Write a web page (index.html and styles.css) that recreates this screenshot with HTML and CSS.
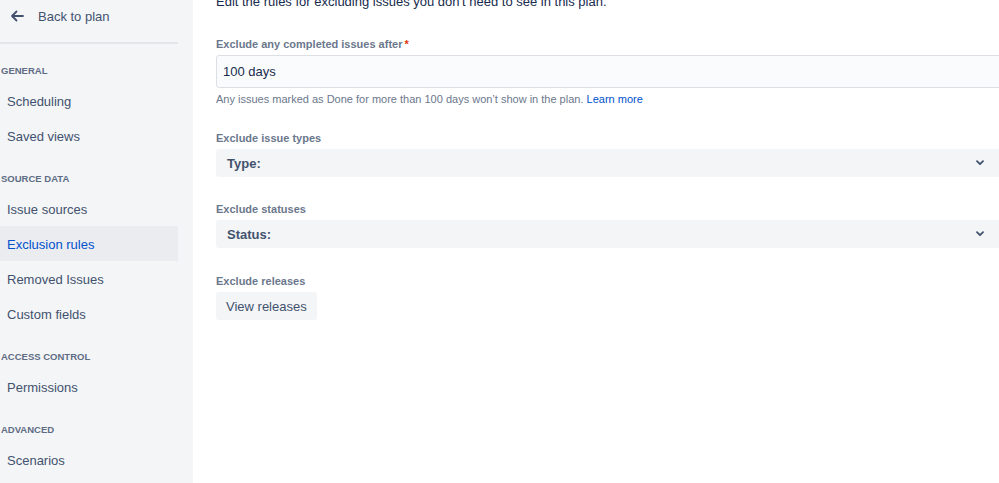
FILE: index.html
```html
<!DOCTYPE html>
<html>
<head>
    <link rel="stylesheet" href="styles.css">
</head>
<body>
<div class="page">

    <!-- left navigation of the plan settings -->
    <aside class="sidebar">
        <a class="back-link" href="#">
            <svg class="back-icon" width="14" height="12" viewBox="0 0 14 12">
                <path d="M13 6H2M6.5 1.5L2 6l4.5 4.5" fill="none" stroke="#42526e" stroke-width="1.8" stroke-linecap="round" stroke-linejoin="round"/>
            </svg>
            <span>Back to plan</span>
        </a>
        <div class="divider"></div>

        <div class="group-title">General</div>
        <a class="nav-item" href="#">Scheduling</a>
        <a class="nav-item" href="#">Saved views</a>

        <div class="group-title">Source data</div>
        <a class="nav-item" href="#">Issue sources</a>
        <a class="nav-item active" href="#">Exclusion rules</a>
        <a class="nav-item" href="#">Removed Issues</a>
        <a class="nav-item" href="#">Custom fields</a>

        <div class="group-title">Access control</div>
        <a class="nav-item" href="#">Permissions</a>

        <div class="group-title">Advanced</div>
        <a class="nav-item" href="#">Scenarios</a>
    </aside>

    <!-- exclusion rules form -->
    <main class="content">
        <p class="intro">Edit the rules for excluding issues you don't need to see in this plan.</p>

        <div class="field first">
            <label class="field-label" for="completedAfter">Exclude any completed issues after<span class="required">*</span></label>
            <div class="text-input" id="completedAfter">100 days</div>
            <div class="helper">Any issues marked as Done for more than 100 days won’t show in the plan. <a href="#" class="learn-more">Learn more</a></div>
        </div>

        <div class="field">
            <div class="field-label">Exclude issue types</div>
            <div class="select">
                <span>Type:</span>
                <svg class="chevron" width="8" height="6" viewBox="0 0 8 6">
                    <path d="M1 1.2l3 3 3-3" fill="none" stroke="#42526e" stroke-width="1.8" stroke-linecap="round" stroke-linejoin="round"/>
                </svg>
            </div>
        </div>

        <div class="field">
            <div class="field-label">Exclude statuses</div>
            <div class="select">
                <span>Status:</span>
                <svg class="chevron" width="8" height="6" viewBox="0 0 8 6">
                    <path d="M1 1.2l3 3 3-3" fill="none" stroke="#42526e" stroke-width="1.8" stroke-linecap="round" stroke-linejoin="round"/>
                </svg>
            </div>
        </div>

        <div class="field last">
            <div class="field-label">Exclude releases</div>
            <button class="button" type="button">View releases</button>
        </div>
    </main>

</div>
</body>
</html>
```

FILE: styles.css
```css
html, body {
    margin: 0;
    padding: 0;
    height: 100%;
    overflow: hidden;
}

body {
    font-family: "Liberation Sans", Arial, sans-serif;
    background-color: #ffffff;
    color: #172b4d;
}

a {
    text-decoration: none;
}

.page {
    display: flex;
    height: 100%;
}

/* Sidebar */

.sidebar {
    flex: 0 0 193px;
    background-color: #f4f5f7;
    display: flex;
    flex-direction: column;
}

.back-link {
    display: flex;
    align-items: center;
    height: 32px;
    padding-left: 10px;
    font-size: 13px;
    color: #42526e;
}

.back-icon {
    margin-right: 14px;
}

.divider {
    width: 178px;
    height: 2px;
    background-color: #e4e6ea;
    margin: 10px 0 1px;
}

.group-title {
    padding: 19px 0 6px 1px;
    line-height: 13px;
    font-size: 9.5px;
    font-weight: bold;
    text-transform: uppercase;
    color: #5e6c84;
}

.nav-item {
    display: block;
    width: 171px;
    height: 35px;
    line-height: 37px;
    padding-left: 7px;
    font-size: 13px;
    color: #42526e;
}

.nav-item.active {
    background-color: #ebecf0;
    color: #0052cc;
}

/* Main content */

.content {
    padding-left: 23px;
    width: 786px;
    flex: 0 0 auto;
}

.intro {
    margin: -8px 0 0;
    font-size: 13px;
    line-height: 20px;
    color: #172b4d;
}

.field {
    margin-top: 25px;
}

.field.last {
    margin-top: 26px;
}

.field-label {
    display: block;
    font-size: 11px;
    font-weight: bold;
    line-height: 14px;
    color: #6b778c;
    margin-bottom: 4px;
}

.required {
    color: #de350b;
    margin-left: 2px;
}

.text-input {
    box-sizing: border-box;
    height: 33px;
    padding-left: 6px;
    line-height: 32px;
    font-size: 13px;
    color: #172b4d;
    background-color: #fafbfc;
    border: 1px solid #dcdfe4;
    border-radius: 3px;
    width: 800px;
}

.helper {
    margin-top: 4px;
    font-size: 11px;
    line-height: 14px;
    color: #6b778c;
}

.learn-more {
    color: #0052cc;
}

.select {
    display: flex;
    align-items: center;
    justify-content: space-between;
    height: 28px;
    padding: 0 18px 0 11px;
    background-color: #f4f5f7;
    border-radius: 3px;
    font-size: 13px;
    font-weight: bold;
    color: #42526e;
}

.button {
    height: 28px;
    padding: 0 10px;
    border: none;
    border-radius: 3px;
    background-color: #f4f5f7;
    font-family: inherit;
    font-size: 13px;
    color: #42526e;
}
```
